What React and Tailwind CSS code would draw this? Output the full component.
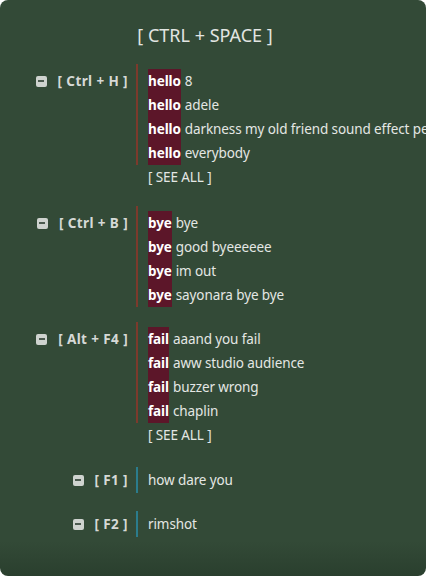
import React from "react";

const groups = [
  {
    keys: "[ Ctrl + H ]",
    word: "hello",
    bar: "border-[#7c3a2c]",
    items: ["8", "adele", "darkness my old friend sound effect perfect", "everybody"],
    seeAll: true,
    gap: "mb-[17px]",
  },
  {
    keys: "[ Ctrl + B ]",
    word: "bye",
    bar: "border-[#7c3a2c]",
    items: ["bye", "good byeeeeee", "im out", "sayonara bye bye"],
    seeAll: false,
    gap: "mb-[15px]",
  },
  {
    keys: "[ Alt + F4 ]",
    word: "fail",
    bar: "border-[#7c3a2c]",
    items: ["aaand you fail", "aww studio audience", "buzzer wrong", "chaplin"],
    seeAll: true,
    gap: "mb-[20px]",
  },
];

const singles = [
  { keys: "[ F1 ]", text: "how dare you" },
  { keys: "[ F2 ]", text: "rimshot" },
];

function Minus() {
  return (
    <span className="flex items-center justify-center w-[11px] h-[11px] rounded-[2px] bg-[#cfd3cf] mr-[11px] shrink-0">
      <span className="block w-[6px] h-[2px] bg-[#4c5a4f]" />
    </span>
  );
}

function KeyLabel({ keys }) {
  return (
    <div className="w-[128px] shrink-0 flex items-center justify-end h-[24px] mt-[5px]">
      <Minus />
      <span className="font-bold text-[13.5px] text-[#d6d9d6] whitespace-pre tracking-[0.4px]">
        {keys}
      </span>
    </div>
  );
}

function Group({ g }) {
  return (
    <div className={"flex " + g.gap}>
      <KeyLabel keys={g.keys} />
      <div className="ml-[8px] flex flex-col min-w-0">
        <div className={"border-l-2 pl-[10px] pt-[5px] " + g.bar}>
          {g.items.map((t, i) => (
            <div key={i} className="h-[24px] flex items-center whitespace-nowrap text-[13.5px] tracking-[-0.1px] text-[#e4e7e4]">
              <span className="bg-[#5c1629] font-bold text-white h-full flex items-center">
                {g.word}
              </span>
              <span className="ml-[4px]">{t}</span>
            </div>
          ))}
        </div>
        {g.seeAll && (
          <div className="h-[24px] pl-[12px] flex items-center text-[13.5px] tracking-[-0.1px] text-[#e4e7e4]">
            [ SEE ALL ]
          </div>
        )}
      </div>
    </div>
  );
}

function Single({ s }) {
  return (
    <div className="flex mb-[18px]">
      <div className="w-[128px] shrink-0 flex items-center justify-end h-[26px]">
        <Minus />
        <span className="font-bold text-[13.5px] text-[#d6d9d6] whitespace-pre tracking-[0.4px]">
          {s.keys}
        </span>
      </div>
      <div className="ml-[8px] border-l-2 border-[#2b7c8c] pl-[10px] h-[26px] flex items-center text-[13.5px] tracking-[-0.1px] text-[#e4e7e4]">
        {s.text}
      </div>
    </div>
  );
}

export default function App() {
  return (
    <div className="w-[426px] h-[576px] overflow-hidden bg-white">
      <div
        className="w-full h-full rounded-[8px] overflow-hidden bg-[linear-gradient(to_bottom,#334a37_0%,#334a37_94%,#2a3f2e_100%)] font-['Noto_Sans','Open_Sans',sans-serif]"
      >
        <div className="pt-[22px] pb-[13px] pr-[16px] text-center text-[18px] text-[#e2e5e2]">
          [ CTRL + SPACE ]
        </div>
        <div className="pt-[2px]">
          {groups.map((g, i) => (
            <Group key={i} g={g} />
          ))}
          {singles.map((s, i) => (
            <Single key={i} s={s} />
          ))}
        </div>
      </div>
    </div>
  );
}
